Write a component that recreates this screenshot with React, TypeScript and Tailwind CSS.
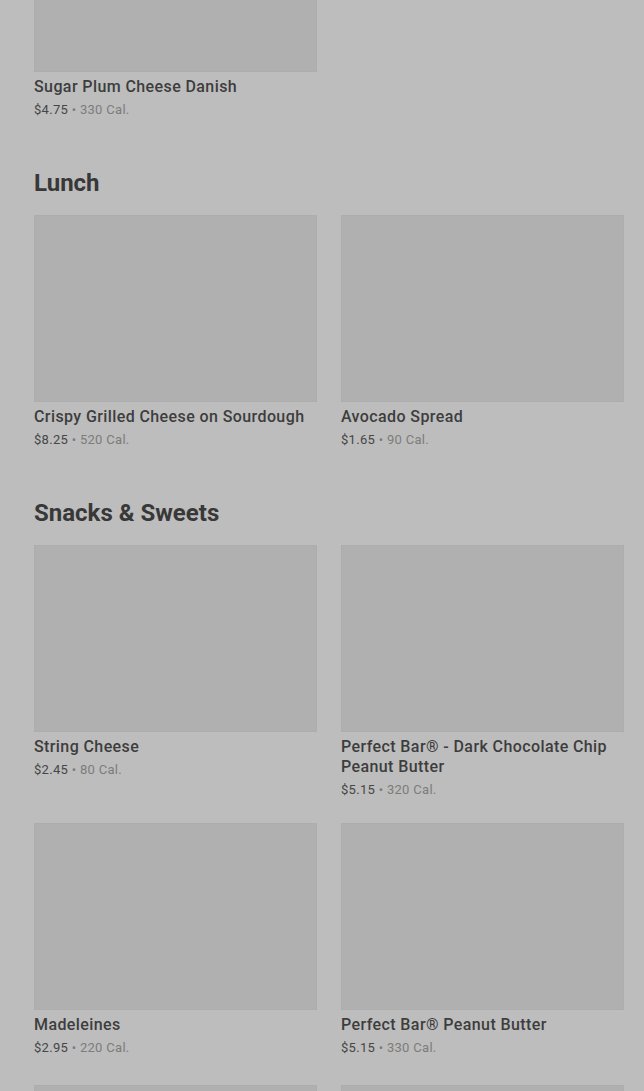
type Item = { name: string; price: string; cal: string };

const sections: { title: string; items: Item[] }[] = [
  {
    title: "",
    items: [{ name: "Sugar Plum Cheese Danish", price: "$4.75", cal: "330 Cal." }],
  },
  {
    title: "Lunch",
    items: [
      { name: "Crispy Grilled Cheese on Sourdough", price: "$8.25", cal: "520 Cal." },
      { name: "Avocado Spread", price: "$1.65", cal: "90 Cal." },
    ],
  },
  {
    title: "Snacks & Sweets",
    items: [
      { name: "String Cheese", price: "$2.45", cal: "80 Cal." },
      { name: "Perfect Bar® - Dark Chocolate Chip Peanut Butter", price: "$5.15", cal: "320 Cal." },
      { name: "Madeleines", price: "$2.95", cal: "220 Cal." },
      { name: "Perfect Bar® Peanut Butter", price: "$5.15", cal: "330 Cal." },
      { name: "", price: "", cal: "" },
      { name: "", price: "", cal: "" },
    ],
  },
];

function Card({ item }: { item: Item }) {
  return (
    <div className="flex flex-col">
      <div className="h-[187px] bg-[#b0b0b0] border border-[#adadad]" />
      {item.name && (
        <div className="mt-[5px] min-h-[47px]">
          <div className="text-[16px] leading-[20px] font-medium tracking-[0.4px] text-[#3d3d3d]">
            {item.name}
          </div>
          <div className="mt-[3px] text-[13px] leading-[20px] tracking-[0.3px] text-[#464646]">
            {item.price}
            <span className="text-[#7c7c7c]"> • {item.cal}</span>
          </div>
        </div>
      )}
    </div>
  );
}

export default function App() {
  return (
    <div
      className="h-[1091px] overflow-hidden bg-[#bdbdbd]"
      style={{ fontFamily: "Roboto, 'Liberation Sans', sans-serif" }}
    >
      <div className="-mt-[115px] pl-[34px] pr-[20px] flex flex-col gap-[43px]">
        {sections.map((s, i) => (
          <section key={i} className="flex flex-col">
            {s.title && (
              <h2 className="text-[24px] leading-[32px] font-bold text-[#383838] mb-[16px]">
                {s.title}
              </h2>
            )}
            <div className="grid grid-cols-2 gap-x-[24px] gap-y-[23px]">
              {s.items.map((it, j) => (
                <Card key={j} item={it} />
              ))}
            </div>
          </section>
        ))}
      </div>
    </div>
  );
}
